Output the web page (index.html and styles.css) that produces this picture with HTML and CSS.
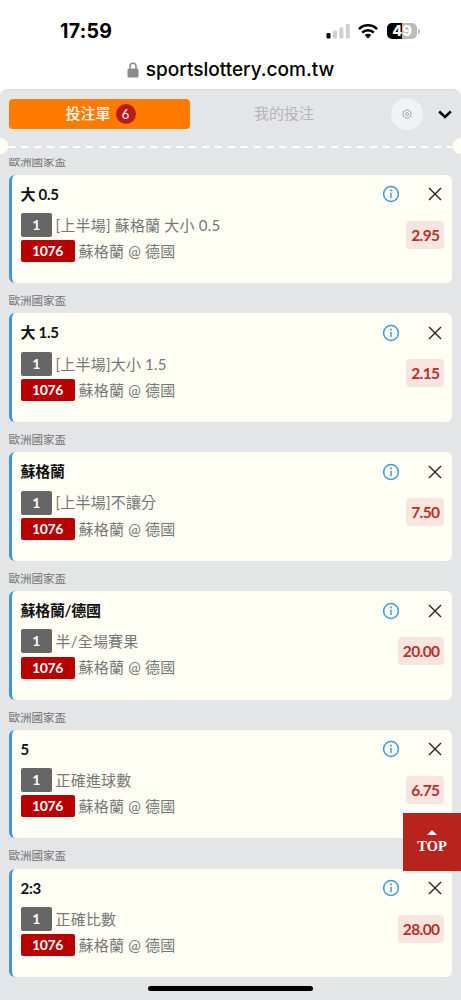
FILE: index.html
```html
<!DOCTYPE html>
<html lang="zh-Hant">
<head>
<meta charset="utf-8">
<title>投注單</title>
<link rel="stylesheet" href="styles.css">
</head>
<body>
<svg width="0" height="0" class="defs">
  <symbol id="info" viewBox="0 0 18 18"><circle cx="9" cy="9" r="7.4" fill="none" stroke="#3f9ad6" stroke-width="1.5"/><path d="M9 7.8V13" stroke="#3f9ad6" stroke-width="1.5"/><circle cx="9" cy="5.4" r="1" fill="#3f9ad6"/></symbol>
  <symbol id="close" viewBox="0 0 14 14"><path d="M1 1 13 13M13 1 1 13" stroke="#222" stroke-width="1.4" fill="none"/></symbol>
</svg>
<header class="phone">
  <div class="status">
    <span class="time">17:59</span>
    <svg class="signal" width="25" height="16" viewBox="0 0 25 16"><rect x="0.5" y="10" width="4" height="5.5" rx="1"/><g fill="#d0d0d0"><rect x="7" y="7.5" width="4" height="8" rx="1"/><rect x="13.3" y="4.5" width="4" height="11" rx="1"/><rect x="19.8" y="1" width="4" height="14.5" rx="1"/></g></svg>
    <svg class="wifi" width="20" height="15" viewBox="0 0 20 15"><g fill="none" stroke="#000" stroke-width="2.5"><path d="M.9 5.1C6 .1 14 .1 19.100 5.100"/><path d="M4.200 8.600C7.500 5.400 12.500 5.400 15.800 8.600"/></g><path d="M6.700 11C8.500 9.300 11.500 9.300 13.300 11L10 14.500Z"/></svg>
    <span class="battery">49</span><i class="battery-tip"></i>
  </div>
  <div class="url">
    <svg width="12" height="16" viewBox="0 0 12 16"><rect x=".5" y="6.500" width="11" height="9" rx="1.500" fill="#8b8b8d"/><path d="M3 7V4.200a3 3 0 0 1 6 0V7" fill="none" stroke="#8b8b8d" stroke-width="1.600"/></svg>
    <span>sportslottery.com.tw</span>
  </div>
</header>
<main class="slip">
  <nav class="tabs">
    <div class="tab active"><span>投注單</span><b class="count">6</b></div>
    <div class="tab"><span>我的投注</span></div>
    <div class="gear"><svg width="10" height="10" viewBox="0 0 10 10" fill="none" stroke="#aaa"><path d="M3.500 1h3l.5 1 1.500.5.5 2.500-.5 2.500L7 8l-.5 1h-3L3 8l-1.500-.5L1 5l.5-2.500L3 2Z"/><circle cx="5" cy="5" r="1.500"/></svg></div>
    <svg class="chevron" width="14" height="9" viewBox="0 0 14 9"><path d="M1.200 1.500 7 7l5.800-5.500" fill="none" stroke="#000" stroke-width="2.500"/></svg>
  </nav>
  <div class="tear"><svg width="461" height="2" viewBox="0 0 461 2"><path d="M8.500 1H453" stroke="#fff" stroke-width="2" stroke-dasharray="7.200 5.700"/></svg></div>
  <div class="list">
    <section class="bet"><h2>歐洲國家盃</h2><article class="card"><div class="head"><h3>大 0.5</h3><svg class="info"><use href="#info"/></svg><svg class="close"><use href="#close"/></svg></div><div class="detail"><div class="lines"><p><b class="num">1</b><span>[上半場] 蘇格蘭 大小 0.5</span></p><p><b class="code">1076</b><span>蘇格蘭 @ 德國</span></p></div><strong class="odds">2.95</strong></div></article></section>
    <section class="bet"><h2>歐洲國家盃</h2><article class="card"><div class="head"><h3>大 1.5</h3><svg class="info"><use href="#info"/></svg><svg class="close"><use href="#close"/></svg></div><div class="detail"><div class="lines"><p><b class="num">1</b><span>[上半場]大小 1.5</span></p><p><b class="code">1076</b><span>蘇格蘭 @ 德國</span></p></div><strong class="odds">2.15</strong></div></article></section>
    <section class="bet"><h2>歐洲國家盃</h2><article class="card"><div class="head"><h3>蘇格蘭</h3><svg class="info"><use href="#info"/></svg><svg class="close"><use href="#close"/></svg></div><div class="detail"><div class="lines"><p><b class="num">1</b><span>[上半場]不讓分</span></p><p><b class="code">1076</b><span>蘇格蘭 @ 德國</span></p></div><strong class="odds">7.50</strong></div></article></section>
    <section class="bet"><h2>歐洲國家盃</h2><article class="card"><div class="head"><h3>蘇格蘭/德國</h3><svg class="info"><use href="#info"/></svg><svg class="close"><use href="#close"/></svg></div><div class="detail"><div class="lines"><p><b class="num">1</b><span>半/全場賽果</span></p><p><b class="code">1076</b><span>蘇格蘭 @ 德國</span></p></div><strong class="odds">20.00</strong></div></article></section>
    <section class="bet"><h2>歐洲國家盃</h2><article class="card"><div class="head"><h3>5</h3><svg class="info"><use href="#info"/></svg><svg class="close"><use href="#close"/></svg></div><div class="detail"><div class="lines"><p><b class="num">1</b><span>正確進球數</span></p><p><b class="code">1076</b><span>蘇格蘭 @ 德國</span></p></div><strong class="odds">6.75</strong></div></article></section>
    <section class="bet"><h2>歐洲國家盃</h2><article class="card"><div class="head"><h3>2:3</h3><svg class="info"><use href="#info"/></svg><svg class="close"><use href="#close"/></svg></div><div class="detail"><div class="lines"><p><b class="num">1</b><span>正確比數</span></p><p><b class="code">1076</b><span>蘇格蘭 @ 德國</span></p></div><strong class="odds">28.00</strong></div></article></section>
  </div>
</main>
<a class="top"><i></i>TOP</a>
<div class="home"></div>
</body>
</html>
```
FILE: styles.css
```css
* { box-sizing: border-box; margin: 0; padding: 0; }
body { width: 461px; height: 1000px; overflow: hidden; position: relative; display: flex; flex-direction: column; background: #fff; font-family: Lato, "Noto Sans CJK TC", sans-serif; }
.defs { position: absolute; }
.phone { height: 89px; flex: none; font-family: Inter, sans-serif; }
.status { height: 54px; padding: 8px 41px 0 60px; display: flex; align-items: center; }
.time { font-size: 19.5px; letter-spacing: .3px; font-weight: 700; flex: 1; }
.signal { margin-right: 7px; }
.wifi { margin-right: 9px; }
.battery { width: 30px; height: 16px; border-radius: 5px; background: linear-gradient(90deg, #000 51%, #bcbcbc 51%); color: #fff; font-size: 14.5px; line-height: 16px; font-weight: 800; text-align: center; }
.battery-tip { width: 2px; height: 5px; margin-left: 1px; border-radius: 0 2px 2px 0; background: #bcbcbc; }
.url { height: 31px; display: flex; align-items: center; justify-content: center; gap: 7px; font-size: 19px; font-weight: 500; }
.slip { flex: 1; min-height: 0; display: flex; flex-direction: column; background: #e4e5e7; border-radius: 8px 8px 0 0; border-top: 1px solid #dcdde0; }
.tabs { height: 48px; flex: none; display: flex; align-items: center; padding: 0 9px; }
.tab { width: 181px; height: 30px; display: flex; align-items: center; justify-content: center; border-radius: 4px; color: #b4b5b7; font-size: 15px; }
.tab span { padding-bottom: 3px; }
.tab.active { background: #ff7b00; color: #fff; font-weight: 500; }
.tab.active span { padding-left: 2px; }
.tab + .tab { width: 188px; }
.count { width: 20px; height: 20px; margin-left: 5px; border-radius: 50%; background: #bd1a17; font-size: 13px; line-height: 20px; font-weight: 400; text-align: center; }
.gear { width: 32px; height: 32px; margin-left: 13px; border-radius: 50%; background: #f1f2f4; display: flex; align-items: center; justify-content: center; }
.chevron { margin-left: 14.5px; }
.tear { height: 20px; flex: none; display: flex; align-items: center; background: radial-gradient(circle at 0 8px, #fffef5 8px, transparent 8.5px), radial-gradient(circle at 461px 8px, #fffef5 8px, transparent 8.5px); }
.tear svg { margin-top: -2px; }
.list { flex: 1; min-height: 0; overflow: hidden; padding: 0 9px 0 8.5px; }
.bet:first-child { margin-top: -13.7px; }
.bet h2 { height: 30.3px; line-height: 36px; font-size: 11.500px; font-weight: 400; color: #717275; }
.card { height: 108.5px; background: #fffef5; border-left: 3px solid #3f97d3; border-radius: 6px; padding: 6px 8px 0 9px; }
.head { height: 27px; display: flex; align-items: center; }
.head h3 { flex: 1; font-size: 15px; line-height: 27px; font-weight: 700; letter-spacing: -.3px; color: #111; }
.info { width: 18px; height: 18px; margin-right: 27.5px; }
.close { width: 14px; height: 14px; margin-right: 2.5px; }
.detail { display: flex; justify-content: space-between; align-items: flex-start; }
.lines { padding-top: 4.4px; }
.lines p { height: 26.2px; display: flex; align-items: center; white-space: pre; font-size: 15px; color: #777; font-weight: 400; letter-spacing: .2px; }
.lines span { padding-bottom: 1.5px; }
.num, .code { color: #fff; font-size: 14px; font-weight: 700; text-align: center; border-radius: 2px; letter-spacing: -.4px; }
.num { width: 31px; height: 24px; line-height: 24px; background: #666; margin-right: 4px; }
.code { width: 54px; height: 22px; line-height: 22px; background: #b90000; margin-right: 4px; }
.odds { height: 28px; line-height: 29px; margin-top: 13px; padding: 0 4.5px 0 5px; border-radius: 4px; background: #f8e5df; color: #b7302b; font-size: 15.500px; letter-spacing: -.6px; font-weight: 700; }
.top { position: absolute; right: 0; top: 813px; width: 58px; height: 58px; padding-top: 17px; background: #b8231d; color: #fff; display: flex; flex-direction: column; align-items: center; font: 700 14.5px/20px "Liberation Serif", serif; }
.top i { width: 0; height: 0; margin-bottom: 1px; border: 5px solid transparent; border-top: 0; border-bottom-color: #fff; }
.home { position: absolute; left: 148px; top: 986px; width: 165px; height: 5px; border-radius: 3px; background: #000; }
```
